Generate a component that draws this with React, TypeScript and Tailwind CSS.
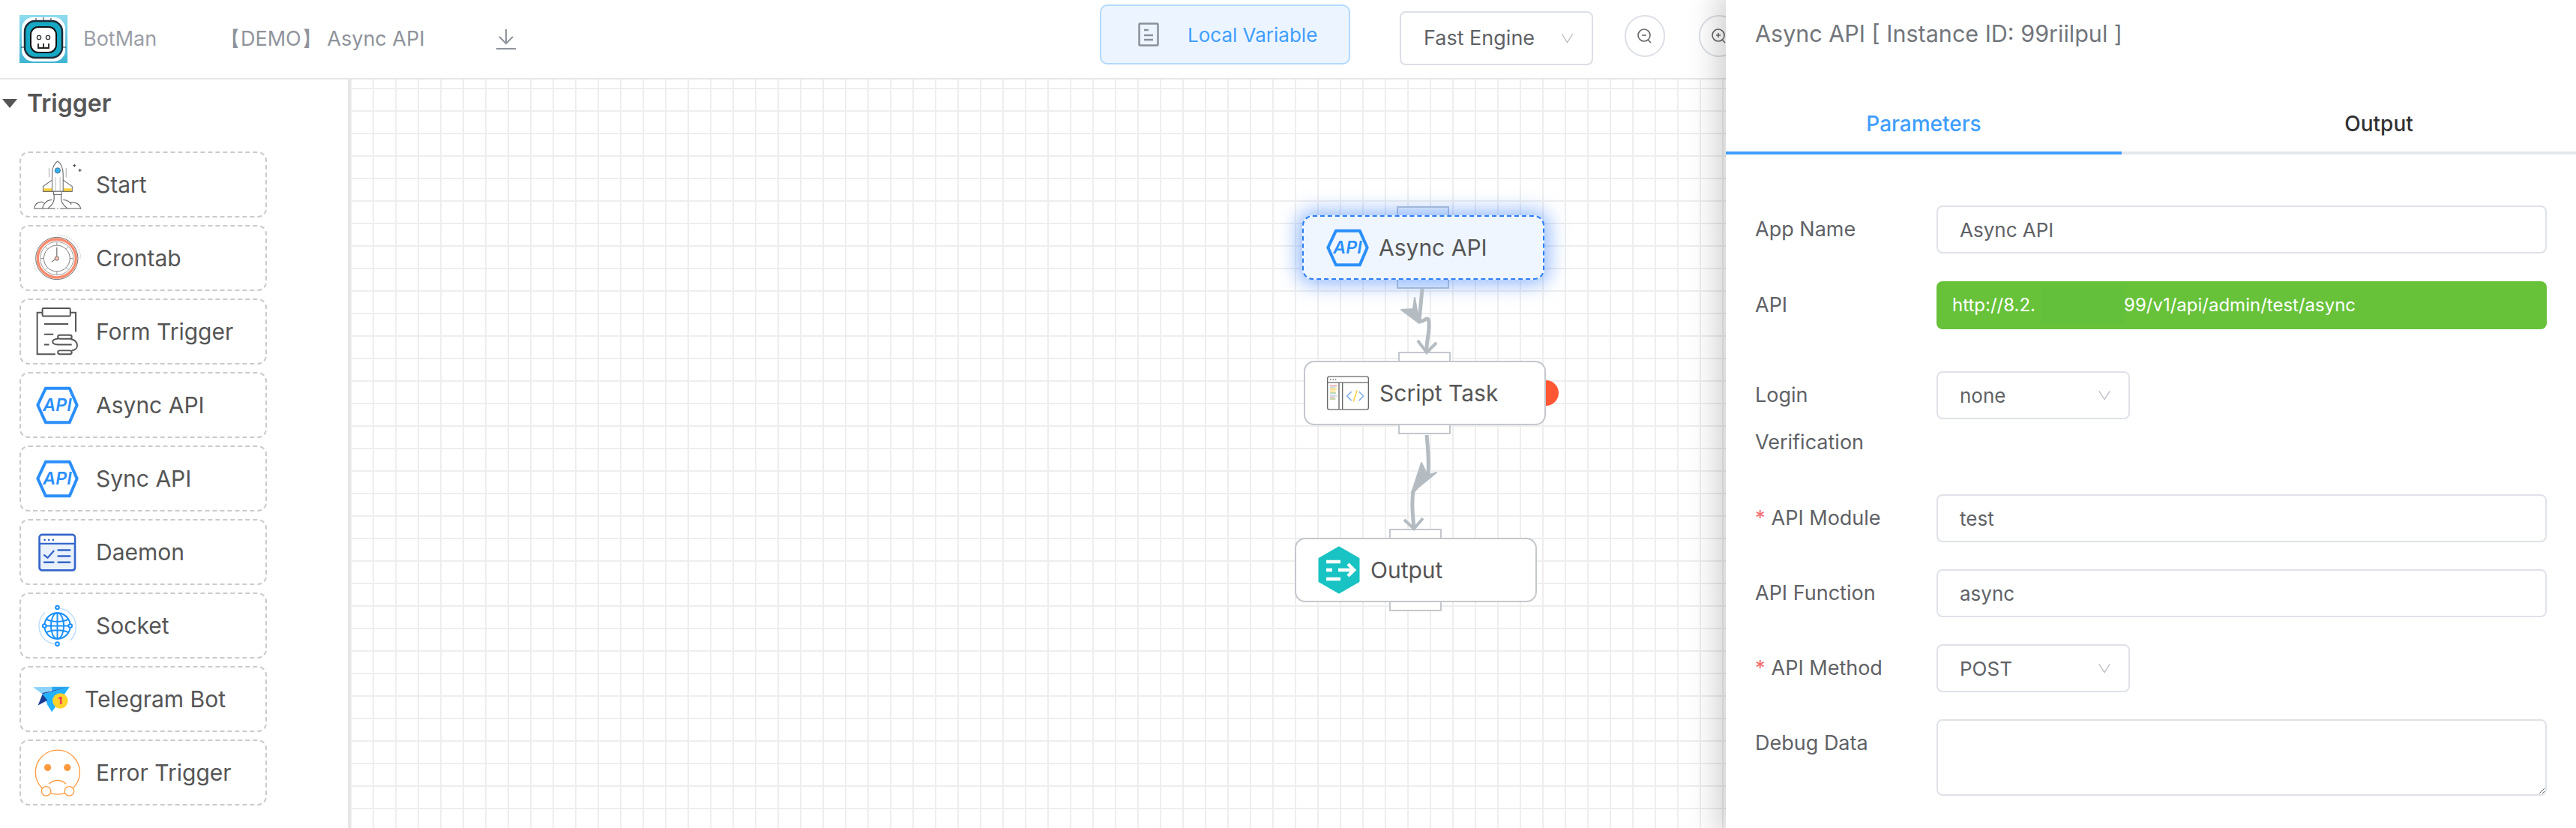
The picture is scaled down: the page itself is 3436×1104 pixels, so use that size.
import React from "react";

const Logo = () => (
  <svg viewBox="0 0 64 64" className="w-16 h-16 shrink-0">
    <defs>
      <linearGradient id="lg" x1="0" y1="0" x2="0" y2="1">
        <stop offset="0" stopColor="#8fdcf0" />
        <stop offset="1" stopColor="#3db4d2" />
      </linearGradient>
    </defs>
    <rect width="64" height="64" fill="url(#lg)" />
    <rect x="3" y="3" width="58" height="59" rx="15" fill="#fff" />
    <rect x="7" y="8" width="50" height="49" rx="14" fill="#17a8c4" stroke="#1c2b36" strokeWidth="2.5" />
    <path d="M2 43H7M57 43H62" stroke="#1c2b36" strokeWidth="1" />
    <path d="M22 4V8M32 3V8M42 4V8" stroke="#334" strokeWidth="1" />
    <rect x="15" y="16" width="34" height="34" rx="10" fill="#fff" stroke="#111" strokeWidth="2" />
    <circle cx="26" cy="30" r="2.6" fill="none" stroke="#333" strokeWidth="1.3" />
    <circle cx="38" cy="30" r="2.6" fill="none" stroke="#333" strokeWidth="1.3" />
    <path d="M25 38V44H39V38M32 38V44" fill="none" stroke="#222" strokeWidth="1.8" />
  </svg>
);

const Rocket = () => (
  <svg viewBox="40 25 194 194" className="w-[65px] h-[65px]" fill="none" stroke="#666" strokeWidth="3">
    <path d="M104 55V92M172 55V92" stroke="#aaa" />
    <path d="M117 102L80 128V148H196V128L159 102" fill="#fff" />
    <rect x="82" y="136" width="34" height="12" fill="#fdd23c" stroke="none" />
    <rect x="162" y="136" width="32" height="12" fill="#fdd23c" stroke="none" />
    <path d="M80 148H196" />
    <path d="M138 28C121 38 116 60 116 82V148H160V82C160 60 155 38 138 28Z" fill="#fff" />
    <path d="M130 92V148M148 92V148" strokeWidth="2" stroke="#999" />
    <circle cx="138" cy="65" r="11" fill="#35b0f2" stroke="#4a5560" strokeWidth="2" />
    <rect x="122" y="148" width="32" height="13" fill="#fff" />
    <path d="M124 161V180C122 192 112 206 100 215M152 161V180C154 192 164 206 176 215" stroke="#555" />
    <path d="M45 216C48 194 66 186 84 192M78 216C80 196 96 182 116 182M160 182C178 182 192 194 192 200M188 192C208 188 226 198 230 216" stroke="#555" />
    <path d="M44 216H128M148 216H232M136 216H140" stroke="#555" />
    <path d="M205 39V51M199 45H211M227 58V70M221 64H233" stroke="#333" />
  </svg>
);

const Clock = () => (
  <svg viewBox="40 320 200 200" className="w-[67px] h-[67px]" fill="none">
    <path d="M140 326A95 95 0 0 1 233 420M45 440A95 95 0 0 0 62 475" stroke="#777" strokeWidth="1.5" strokeDasharray="3 3" />
    <circle cx="138" cy="420" r="84" stroke="#555" strokeWidth="2.5" />
    <circle cx="138" cy="420" r="76" stroke="#fb8b6e" strokeWidth="10" />
    <circle cx="138" cy="420" r="66" stroke="#666" strokeWidth="2" />
    <circle cx="138" cy="420" r="52" stroke="#666" strokeWidth="2.5" />
    <path d="M138 356V368M138 472V484M74 420H86M190 420H202M93 375L101 383M183 375L175 383M93 465L101 457M183 465L175 457" stroke="#666" strokeWidth="2" />
    <path d="M138 376V412M131 424L118 434" stroke="#555" strokeWidth="3" />
    <circle cx="138" cy="420" r="8" fill="#fbc4b4" stroke="#555" strokeWidth="2.5" />
  </svg>
);

const FormIcon = () => (
  <svg viewBox="50 44 176 196" className="w-[59px] h-[65px]" fill="none" stroke="#555" strokeWidth="6">
    <path d="M130 232H57V64H78M190 64H212V142" />
    <rect x="78" y="47" width="112" height="32" rx="4" />
    <path d="M85 110H182M85 152H122M85 193H105" />
    <rect x="140" y="155" width="56" height="15" rx="7.5" />
    <path d="M140 170C112 172 112 192 140 193H196" />
    <rect x="140" y="217" width="56" height="15" rx="7.5" />
    <path d="M190 170C226 178 226 214 196 217" />
  </svg>
);

const Api = () => (
  <svg viewBox="50 358 178 154" className="w-[59px] h-[51px]">
    <path d="M60 434L92 366H188L218 434L188 504H92Z" fill="none" stroke="#2b8ffb" strokeWidth="12" strokeLinejoin="round" />
    <text x="139" y="459" textAnchor="middle" fontSize="70" fontStyle="italic" fontWeight="600" fill="#2b8ffb" fontFamily="Inter, sans-serif">API</text>
  </svg>
);

const Daemon = () => (
  <svg viewBox="62 60 154 154" className="w-[51px] h-[51px]" fill="none" stroke="#3565c9" strokeWidth="7">
    <rect x="67" y="66" width="143" height="143" rx="10" fill="#e9f1fd" />
    <rect x="67" y="66" width="143" height="36" rx="8" fill="#fff" stroke="none" />
    <rect x="67" y="66" width="143" height="143" rx="10" />
    <path d="M67 102H210" />
    <circle cx="88" cy="87" r="4" fill="#3565c9" stroke="none" />
    <circle cx="105" cy="87" r="4" fill="#3565c9" stroke="none" />
    <circle cx="122" cy="87" r="4" fill="#3565c9" stroke="none" />
    <path d="M86 148L100 159L124 132M142 128H190M142 152H190M86 177H124M142 177H190" strokeLinecap="round" />
  </svg>
);

const Globe = () => (
  <svg viewBox="58 346 160 172" className="w-[53px] h-[57px]" fill="none">
    <path d="M88 378A75 75 0 0 0 88 488M150 362A75 75 0 0 1 190 490M88 488A75 75 0 0 0 130 505" stroke="#b7d9fb" strokeWidth="4" />
    <g stroke="#1a90ff" strokeWidth="6">
      <circle cx="138" cy="432" r="52" />
      <ellipse cx="138" cy="432" rx="26" ry="52" />
      <path d="M138 380V484M92 405C120 418 156 418 184 405M92 459C120 446 156 446 184 459M92 432H184" />
      <circle cx="138" cy="358" r="7" fill="#fff" />
      <circle cx="138" cy="505" r="7" fill="#fff" />
      <circle cx="86" cy="432" r="7" fill="#fff" />
      <circle cx="190" cy="432" r="7" fill="#fff" />
    </g>
  </svg>
);

const Telegram = () => (
  <svg viewBox="40 103 152 106" className="w-[51px] h-[35px]">
    <polygon points="42,107 118,105 118,118 80,135" fill="#8ad3fb" />
    <polygon points="118,105 190,105 118,124" fill="#2aa7f0" />
    <polygon points="80,135 190,105 118,207 100,178 90,150" fill="#23b2ff" />
    <polygon points="80,135 62,180 100,160" fill="#1b3e93" />
    <polygon points="80,135 190,105 80,130" fill="#1a4aa0" />
    <circle cx="152" cy="162" r="31" fill="#fdd42b" />
    <text x="152" y="176" textAnchor="middle" fontSize="38" fontWeight="800" fill="#ee2e5d" fontFamily="Inter, sans-serif">1</text>
  </svg>
);

const Sad = () => (
  <svg viewBox="42 350 190 195" className="w-[63px] h-[65px]" fill="none" stroke="#fd9a3e" strokeWidth="4">
    <circle cx="138" cy="445" r="89" fill="#fff" />
    <circle cx="98" cy="426" r="14" fill="#fd9a3e" stroke="none" />
    <circle cx="177" cy="426" r="14" fill="#fd9a3e" stroke="none" />
    <path d="M103 492C124 473 152 473 172 492" />
    <circle cx="92" cy="521" r="19" fill="#fff" />
    <circle cx="185" cy="521" r="19" fill="#fff" />
  </svg>
);

const Script = () => (
  <svg viewBox="150 33 168 137" className="w-[56px] h-[46px]" fill="none" stroke="#666" strokeWidth="4">
    <rect x="152" y="36" width="164" height="132" rx="8" fill="#fff" />
    <path d="M152 60H316M198 60V166M212 60V166" />
    <path d="M162 48H167M173 48H178M183 48H187" strokeWidth="4" stroke="#555" />
    <g stroke="none">
      <rect x="162" y="69" width="28" height="7" fill="#f6b9b4" />
      <rect x="162" y="76" width="22" height="6" fill="#bfdcf4" />
      <rect x="162" y="82" width="27" height="8" fill="#fbe28e" />
      <rect x="162" y="90" width="22" height="8" fill="#fbe9a8" />
      <rect x="162" y="98" width="24" height="7" fill="#c4d9b4" />
      <rect x="162" y="109" width="27" height="7" fill="#c6dcf6" />
      <rect x="162" y="116" width="20" height="6" fill="#f6c3bd" />
      <rect x="162" y="122" width="22" height="7" fill="#c4d9b4" />
    </g>
    <path d="M248 96L230 114L248 132M278 96L296 114L278 132" stroke="#8db3e8" strokeWidth="5" />
    <path d="M270 90L256 136" stroke="#fbd24a" strokeWidth="5" />
  </svg>
);

const OutputIcon = () => (
  <svg viewBox="0 0 56 64" className="w-[56px] h-[64px]">
    <polygon points="28,2 54,17 54,47 28,62 2,47 2,17" fill="#19c3c3" stroke="#19c3c3" strokeWidth="3" strokeLinejoin="round" />
    <path d="M11 21H30M11 32H19M11 44H30M27 32H47M40 24L48 32L40 40" fill="none" stroke="#fff" strokeWidth="4.5" />
  </svg>
);

const Chevron = ({ className }: { className: string }) => (
  <svg viewBox="0 0 20 20" className={className} fill="none" stroke="#b4b8c0" strokeWidth="1.4">
    <path d="M1 3L10 17L19 3" />
  </svg>
);

const triggers: { name: string; icon: React.ReactNode; slot: string }[] = [
  { name: "Start", icon: <Rocket />, slot: "w-[96px]" },
  { name: "Crontab", icon: <Clock />, slot: "w-[96px]" },
  { name: "Form Trigger", icon: <FormIcon />, slot: "w-[96px]" },
  { name: "Async API", icon: <Api />, slot: "w-[96px]" },
  { name: "Sync API", icon: <Api />, slot: "w-[96px]" },
  { name: "Daemon", icon: <Daemon />, slot: "w-[96px]" },
  { name: "Socket", icon: <Globe />, slot: "w-[96px]" },
  { name: "Telegram Bot", icon: <Telegram />, slot: "w-[81px]" },
  { name: "Error Trigger", icon: <Sad />, slot: "w-[96px]" },
];

const CanvasNode = ({ pos, children, selected }: { pos: string; children: React.ReactNode; selected?: boolean }) => (
  <div className={`absolute w-[323px] h-[86px] ${pos}`}>
    <div className={`absolute left-[126px] -top-[12px] w-[70px] h-[110px] border-2 ${selected ? "border-[#b9c4d4] bg-[#eef5ff]" : "border-[#c4c7cc] bg-white"}`} />
    <div
      className={`absolute inset-0 flex items-center pl-[29px] gap-[14px] rounded-[14px] border-2 text-[30px] text-[#555] ${
        selected
          ? "border-dashed border-[#2d7ef7] bg-[#eff6ff] shadow-[0_0_26px_6px_rgba(60,130,250,0.55)]"
          : "border-[#c4c7cc] bg-white"
      }`}
    >
      {children}
    </div>
  </div>
);

const Field = ({ children, className = "" }: { children: React.ReactNode; className?: string }) => (
  <div className={`h-16 flex items-center px-[29px] border-2 border-[#dfe2e8] rounded-lg bg-white text-[26px] text-[#606266] ${className}`}>
    {children}
  </div>
);

const Label = ({ children, required }: { children: React.ReactNode; required?: boolean }) => (
  <div className="w-[242px] shrink-0 text-[27px] leading-[63px] text-[#606266]">
    {required && <span className="text-[#f56c6c] mr-[8px]">*</span>}
    {children}
  </div>
);

const SelectField = ({ value }: { value: string }) => (
  <Field className="w-[258px] justify-between pr-[22px]">
    <span>{value}</span>
    <Chevron className="w-[20px] h-[16px]" />
  </Field>
);

export default function App() {
  return (
    <div className="relative w-[3436px] h-[1104px] overflow-hidden bg-white font-['Inter',sans-serif]">
      <header className="h-[106px] border-b-2 border-[#e6e6e6] flex items-center">
        <div className="w-[294px] shrink-0 flex items-center pl-[26px] gap-[21px]">
          <Logo />
          <span className="text-[27px] text-[#9a9ea6]">BotMan</span>
        </div>
        <span className="w-[368px] shrink-0 text-[27px] text-[#8f939b]">【DEMO】 Async API</span>
        <svg viewBox="0 0 26 28" className="w-[26px] h-[28px]" fill="none" stroke="#8f939b" strokeWidth="2">
          <path d="M13 1V19M4 11L13 20L22 11M0 27H26" />
        </svg>
        <div className="ml-auto pr-[1116px] flex items-center">
          <button className="w-[334px] h-[80px] mt-[-12px] flex items-center pl-[49px] border-2 border-[#b3d8ff] rounded-[10px] bg-[#ecf5ff] text-[26px] text-[#409eff]">
            <svg viewBox="0 0 28 32" className="w-[28px] h-[32px] mr-[38px]" fill="none" stroke="#8a8f99" strokeWidth="2.5">
              <rect x="1.5" y="1.5" width="25" height="29" rx="1" />
              <path d="M8 10H14M8 17H20M8 23H20" />
            </svg>
            Local Variable
          </button>
          <div className="ml-[66px] w-[258px] h-[72px] mt-[-2px] flex items-center justify-between pl-[30px] pr-[22px] border-2 border-[#dcdfe6] rounded-lg text-[27px] text-[#606266]">
            <span>Fast Engine</span>
            <Chevron className="w-[21px] h-[16px]" />
          </div>
          <div className="ml-[42px] w-[54px] h-[56px] mt-[-8px] rounded-full border-2 border-[#dcdfe6] flex items-center justify-center">
            <svg viewBox="0 0 22 20" className="w-[22px] h-[20px]" fill="none" stroke="#666" strokeWidth="1.6">
              <circle cx="10" cy="9" r="8" />
              <path d="M7 9H13M15 15L19 19" />
            </svg>
          </div>
          <div className="ml-[45px] w-[54px] h-[56px] mt-[-8px] rounded-full border-2 border-[#dcdfe6] flex items-center justify-center">
            <svg viewBox="0 0 22 20" className="w-[22px] h-[20px]" fill="none" stroke="#666" strokeWidth="1.6">
              <circle cx="10" cy="9" r="8" />
              <path d="M7 9H13M10 6V12M15 15L19 19" />
            </svg>
          </div>
        </div>
      </header>

      <div className="flex h-[998px]">
        <aside className="w-[468px] shrink-0 border-r-4 border-[#e6e6e6]">
          <div className="h-[96px] pb-[32px] flex items-center gap-[13px] pl-[3px] text-[#555]">
            <span className="w-0 h-0 border-x-[10px] border-x-transparent border-t-[12px] border-t-[#555]" />
            <span className="text-[32px] font-semibold">Trigger</span>
          </div>
          <div className="flex flex-col gap-[10px] pl-[26px]">
            {triggers.map((t) => (
              <div key={t.name} className="w-[330px] h-[88px] flex items-center gap-[4px] border-2 border-dashed border-[#c9cbd0] rounded-[12px] text-[30px] text-[#555]">
                <span className={`${t.slot} shrink-0 flex justify-center`}>{t.icon}</span>
                <span>{t.name}</span>
              </div>
            ))}
          </div>
        </aside>

        <main className="relative flex-1 bg-white bg-[linear-gradient(to_right,#eeeeee_2px,transparent_2px),linear-gradient(to_bottom,#eeeeee_2px,transparent_2px)] bg-size-[30px_30px] bg-position-[29px_11px]">
          <CanvasNode pos="left-[1269px] top-[181px]" selected>
            <Api />
            <span className="-ml-[2px]">Async API</span>
          </CanvasNode>
          <CanvasNode pos="left-[1271px] top-[375px]">
            <Script />
            <span>Script Task</span>
          </CanvasNode>
          <CanvasNode pos="left-[1259px] top-[611px]">
            <OutputIcon />
            <span>Output</span>
          </CanvasNode>
          <div className="absolute left-[1594px] top-[401px] w-[17px] h-[34px] rounded-r-full bg-[#ff5733]" />
          <svg viewBox="468 106 1834 998" className="absolute left-0 top-0 w-[1834px] h-[998px] pointer-events-none" fill="none" stroke="#b4bcc2" strokeWidth="5">
            <path d="M1897 385L1893 428C1898 432 1905 418 1906 430C1907 445 1902 455 1903 470" />
            <path d="M1869 413L1893 431L1887 397L1885 412Z" fill="#b4bcc2" stroke="#b4bcc2" strokeWidth="2" strokeLinejoin="round" />
            <path d="M1891 454L1903 470L1916 457" strokeWidth="4" />
            <path d="M1903 580C1905 600 1906 615 1905 632L1885 655C1882 675 1885 690 1886 705" />
            <path d="M1896 617L1883 657L1916 630L1904 634Z" fill="#b4bcc2" stroke="#b4bcc2" strokeWidth="2" strokeLinejoin="round" />
            <path d="M1873 693L1886 705L1898 691" strokeWidth="4" />
          </svg>
        </main>
      </div>

      <section className="absolute top-0 right-0 bottom-0 w-[1134px] bg-white shadow-[0_0_40px_10px_rgba(0,0,0,0.2)]">
        <div className="h-[90px] mb-[38px] pl-[39px] flex items-center text-[30.5px] text-[#72767b]">
          Async API [ Instance ID: 99riilpul ]
        </div>
        <div className="flex h-[78px] border-b-4 border-[#e4e7ed] text-[28px] font-medium">
          <div className="w-[528px] h-[78px] border-b-4 border-[#409eff] text-[#409eff] flex items-center justify-center">Parameters</div>
          <div className="flex-1 flex items-center justify-center pl-[80px] text-[#303133]">Output</div>
        </div>
        <div className="pt-[68px] pl-[39px] pr-[39px]">
          <div className="flex mb-[37px]">
            <Label>App Name</Label>
            <Field className="flex-1">Async API</Field>
          </div>
          <div className="flex mb-[56px]">
            <Label>API</Label>
            <div className="flex-1 h-16 flex items-center pl-[21px] rounded-lg bg-[#67c23a] text-white text-[24px]">
              <span className="w-[118px]">http://8.2.</span>
              <span className="w-[111px] h-[50px] bg-[#63c03a]" />
              <span>99/v1/api/admin/test/async</span>
            </div>
          </div>
          <div className="flex mb-[38px] h-[126px]">
            <Label>Login<br />Verification</Label>
            <SelectField value="none" />
          </div>
          <div className="flex mb-9">
            <Label required>API Module</Label>
            <Field className="flex-1">test</Field>
          </div>
          <div className="flex mb-9">
            <Label>API Function</Label>
            <Field className="flex-1">async</Field>
          </div>
          <div className="flex mb-9">
            <Label required>API Method</Label>
            <SelectField value="POST" />
          </div>
          <div className="flex">
            <Label>Debug Data</Label>
            <textarea readOnly className="flex-1 h-[102px] border-2 border-[#dfe2e8] rounded-lg resize-y bg-white outline-none" />
          </div>
        </div>
      </section>
    </div>
  );
}
